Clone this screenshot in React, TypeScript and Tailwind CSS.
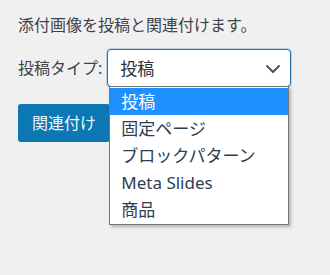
const options = ['投稿', '固定ページ', 'ブロックパターン', 'Meta Slides', '商品']

export default function App() {
  return (
    <div
      className="h-[275px] w-[330px] overflow-hidden bg-[#f0f0f1] pl-[18px] text-[#3c434a]"
      style={{ fontFamily: '"Noto Sans", "Noto Sans CJK JP", sans-serif' }}
    >
      <p className="pt-[12px] text-[16px] leading-[26px]">添付画像を投稿と関連付けます。</p>

      <div className="mt-[11px] flex items-center">
        <span className="text-[16px] leading-[24px]">投稿タイプ:</span>
        <div className="relative ml-[5px]">
          <div className="flex h-[38px] w-[184px] items-center justify-between rounded-[4px] border border-[#2271b1] bg-white pl-[12px] pr-[10px] shadow-[0_0_0_1px_rgba(34,113,177,0.25)]">
            <span className="text-[17px] leading-none text-[#2c3338]">投稿</span>
            <svg width="14" height="8" viewBox="0 0 14 8" fill="none" className="mt-[1px]">
              <path d="M1 1l6 6 6-6" stroke="#50575e" strokeWidth="2" strokeLinecap="round" strokeLinejoin="round" />
            </svg>
          </div>
          <ul className="absolute left-[2px] top-[37px] z-10 w-[180px] border border-[#767676] bg-white py-[1px] shadow-[2px_2px_3px_rgba(0,0,0,0.25)]">
            {options.map((o, i) => (
              <li
                key={o}
                className={`flex h-[27px] items-center px-[11px] text-[17px] leading-none ${
                  i === 0 ? 'bg-[#1e90ff] text-white' : 'text-[#2c3e50]'
                }`}
              >
                {o}
              </li>
            ))}
          </ul>
        </div>
      </div>

      <button className="mt-[17px] flex h-[38px] w-[92px] items-center rounded-[3px] bg-[#0b77b3] pl-[14px] text-[16px] text-[#f0f6fc]">
        関連付け
      </button>
    </div>
  )
}
